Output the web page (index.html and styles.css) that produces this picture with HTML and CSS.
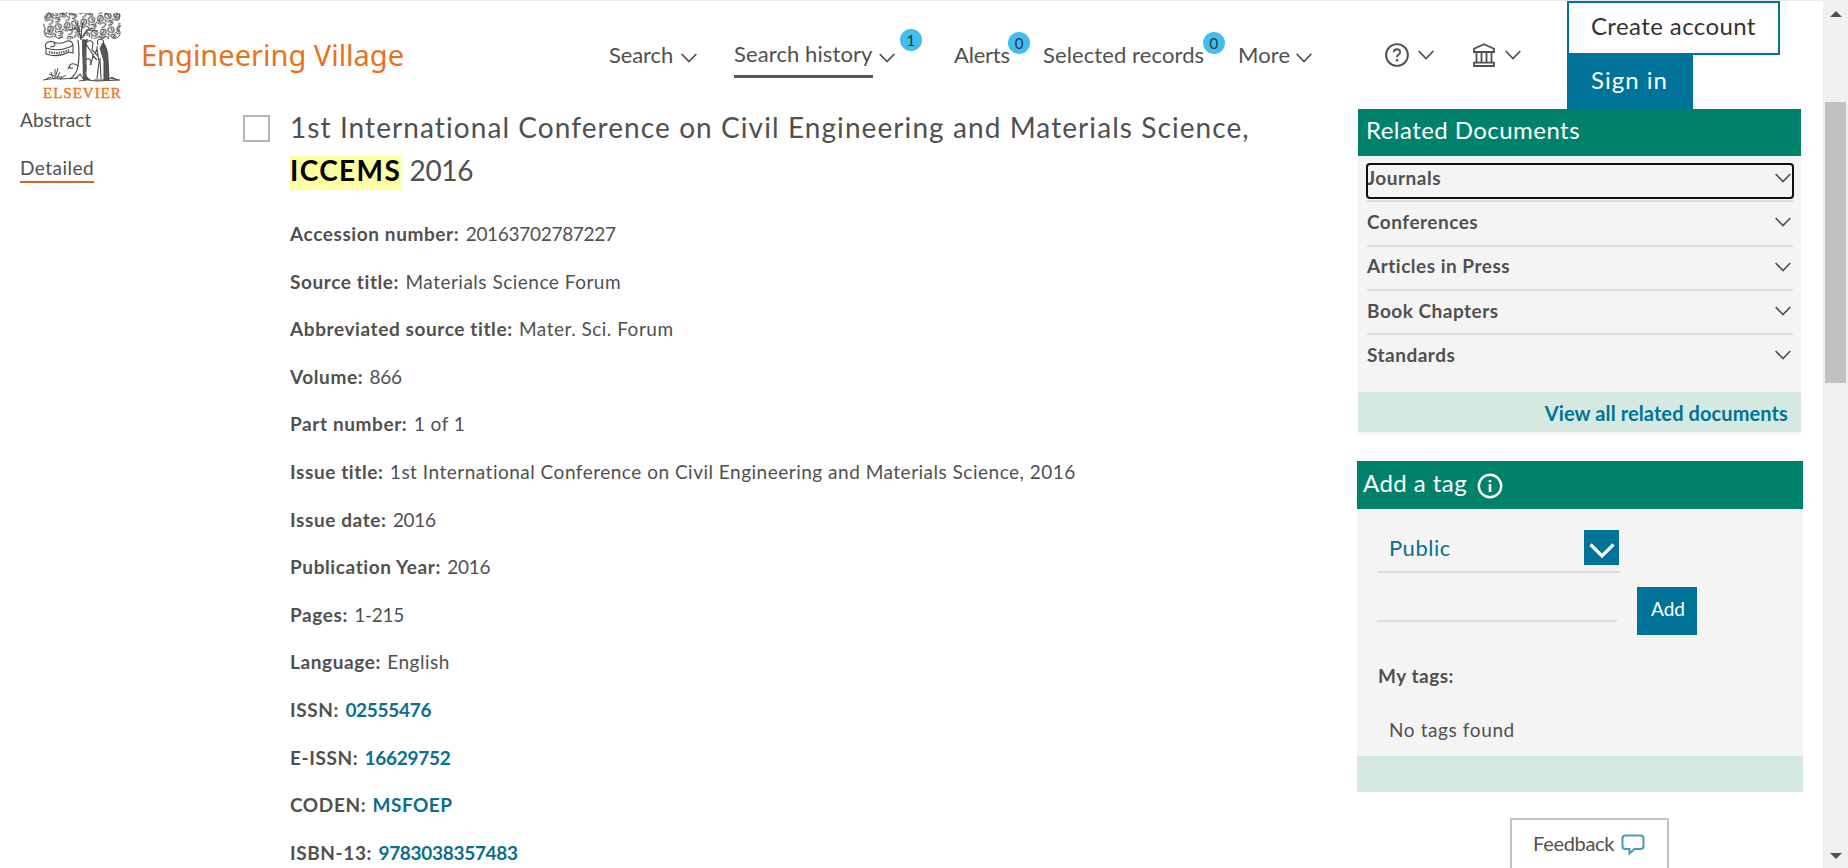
FILE: index.html
```
<!DOCTYPE html>
<html lang="en">
<head>
    <meta charset="UTF-8">
    <meta name="viewport" content="width=device-width, initial-scale=1.0">
    <title>Engineering Village - Detailed record</title>
    <link rel="stylesheet" href="styles.css">
</head>
<body>
    <!-- shared icons -->
    <svg class="sprite" width="0" height="0">
        <symbol id="chevron" viewBox="0 0 16 10">
            <path d="M.7 1 8 8.6 15.3 1" fill="none" stroke="currentColor" stroke-width="1.7"/>
        </symbol>
    </svg>

    <div class="page">
        <header class="header">
            <a class="brand" href="#">
                <svg class="brand-tree" viewBox="0 0 78 70" fill="none" stroke="#4a4a4c">
                    <defs>
                        <pattern id="leaves" width="17" height="14" patternUnits="userSpaceOnUse" patternTransform="rotate(-12)">
                            <path d="M1 4Q2 0 6 2Q8 6 4 7Q0 7 1 4M5 3 2 6M9 2Q13-1 15 3Q15 7 11 6Q8 5 9 2M12 2 13 5M2 10Q5 7 8 11Q6 14 3 13M10 9Q15 7 15 11Q13 14 10 12M8 6 9 9M0 9 2 8M15 8 17 7M12 11 14 10" stroke="#4a4a4c" stroke-width="1.15"/>
                        </pattern>
                    </defs>
                    <path fill="url(#leaves)" stroke="none" d="M3 2Q6-1 9 1Q13 0 16 2Q21-1 26 1Q30 0 34 2Q39 0 43 1Q48 0 52 2Q57-1 61 1Q66 0 70 2Q76-1 78 3Q76 7 77 10Q79 14 76 16Q79 21 77 24Q74 28 68 26Q62 29 56 26Q50 28 46 25Q43 22 41 25L38 27Q35 24 31 26Q25 29 20 26Q14 28 10 25Q5 28 2 23Q-1 19 2 16Q-1 12 2 9Q-1 5 3 2Z"/>
                    <path stroke-width=".9" d="M3 3Q5 0 8 2Q10 4 8 6M16 2Q19 0 22 3M26 2Q30 0 32 4M44 2Q48 0 50 4M61 2Q65 0 66 5M70 3Q75 0 77 4Q77 7 74 8M1 12Q0 16 3 17M77 13Q78 16 74 17M2 20Q1 25 6 25Q10 26 10 22M13 25Q17 28 20 24M56 25Q60 28 63 24M67 24Q73 29 77 23"/>
                    <path stroke-width="1.2" d="M38 28Q38 20 31 15M38 27Q38 18 40 11M39 26Q42 19 49 16M32 17 26 18M46 18 55 19M37 20 34 11M35 28Q37 42 35 54Q34 62 27 67M40 27Q39 40 41 52Q39 61 45 67"/>
                    <path stroke-width="1.1" d="M40 50Q45 54 42 60M41 48Q49 44 48 53M32 67 37 62 41 68M35 54Q30 50 27 53Q25 57 30 56M27 53 25 57"/>
                    <!-- banner -->
                    <path stroke-width="1.1" d="M3 36Q14 40 27 35L30 33 30 41 26 40Q15 46 3 42ZM3 36Q1 32 5 30Q10 28 12 32Q12 35 7 35M10 30Q18 33 24 29Q29 28 30 33"/>
                    <path stroke-width="2" stroke-dasharray="1.4 1" d="M6 40Q16 42.500 26 38"/>
                    <!-- old man -->
                    <path fill="#55565a" stroke="none" d="M39 28 45 27 43 34 42 64 47 68 40 68ZM60 30Q66 35 65 49L66 68 61 68 61 48 57 35Z"/>
                    <path stroke-width="1.1" d="M43 28 43 65 47 68M55 33Q53 27 58 27Q62 28 60 34Q65 38 65 48L66 68 51 68M54 34Q55 39 50 43L43 32M54 37 56 50 54 67M57 36 61 49 61 68M44 30Q48 27 50 31L49 38 55 44M50 43Q49 50 47 53M50 44 54 48M57 46 58 67"/>
                    <!-- ground -->
                    <path stroke-width="1" d="M0 68Q11 66 17 67L35 66M36 69Q45 67 53 69L77 68M68 65 73 67M66 66 76 68M10 67 8 60M12 67 12 57M14 66 17 60M11 64 6 62M13 63 15 56M17 67 23 63M12 65 19 65M3 67 8 65"/>
                </svg>
                <span class="brand-name">ELSEVIER</span>
            </a>
            <a class="product" href="#">Engineering Village</a>

            <nav class="nav">
                <a class="nav-item nav-search" href="#">Search <svg class="chevron"><use href="#chevron"/></svg></a>
                <a class="nav-item nav-history" href="#"><span class="current">Search history</span> <svg class="chevron"><use href="#chevron"/></svg><span class="badge">1</span></a>
                <a class="nav-item nav-alerts" href="#">Alerts<span class="badge">0</span></a>
                <a class="nav-item nav-records" href="#">Selected records<span class="badge">0</span></a>
                <a class="nav-item nav-more" href="#">More <svg class="chevron"><use href="#chevron"/></svg></a>
            </nav>

            <div class="tools">
                <a class="tool tool-help" href="#">
                    <svg class="tool-icon" viewBox="0 0 24 24" fill="none" stroke="currentColor" stroke-width="1.9">
                        <circle cx="12" cy="12" r="10.9"/>
                        <path d="M8.9 9.3Q9 6.2 12 6.2Q15.2 6.3 15.1 9.2Q15 10.900 13.2 11.8Q12 12.400 12 14.3"/>
                        <path d="M12 16.2V18.4" stroke-width="2.3"/>
                    </svg>
                    <svg class="chevron"><use href="#chevron"/></svg>
                </a>
                <a class="tool" href="#">
                    <svg class="tool-icon" viewBox="0 0 24 24" fill="none" stroke="currentColor" stroke-width="1.8">
                        <path d="M2 9V5.8L12 1.3 22 5.8V9ZM2 23V19.6H22V23ZM4.5 9V19.6M9.5 9V19.6M14.5 9V19.6M19.5 9V19.6"/>
                    </svg>
                    <svg class="chevron"><use href="#chevron"/></svg>
                </a>
            </div>

            <div class="account">
                <a class="create-account" href="#">Create account</a>
                <a class="sign-in" href="#">Sign in</a>
            </div>
        </header>

        <div class="content">
            <aside class="views">
                <a class="view" href="#">Abstract</a>
                <a class="view active" href="#">Detailed</a>
            </aside>

            <main class="record">
                <span class="checkbox"></span>
                <div class="record-body">
                    <h1 class="title">1st International Conference on Civil Engineering and Materials Science, <mark class="hit">ICCEMS</mark> <span class="year">2016</span></h1>
                    <ul class="fields">
                        <li><b>Accession number:</b> <span class="num">20163702787227</span></li>
                        <li><b>Source title:</b> Materials Science Forum</li>
                        <li><b>Abbreviated source title:</b> Mater. Sci. Forum</li>
                        <li><b>Volume:</b> <span class="num">866</span></li>
                        <li><b>Part number:</b> 1 of 1</li>
                        <li><b>Issue title:</b> 1st International Conference on Civil Engineering and Materials Science, 2016</li>
                        <li><b>Issue date:</b> <span class="num">2016</span></li>
                        <li><b>Publication Year:</b> <span class="num">2016</span></li>
                        <li><b>Pages:</b> <span class="num">1-215</span></li>
                        <li><b>Language:</b> English</li>
                        <li><b>ISSN:</b> <a class="num" href="#">02555476</a></li>
                        <li><b>E-ISSN:</b> <a class="num" href="#">16629752</a></li>
                        <li><b>CODEN:</b> <a href="#">MSFOEP</a></li>
                        <li><b>ISBN-13:</b> <a class="num" href="#">9783038357483</a></li>
                    </ul>
                </div>
            </main>

            <aside class="side">
                <section class="panel related">
                    <h2 class="panel-title">Related Documents</h2>
                    <div class="related-list">
                        <a class="related-row focused" href="#">Journals <svg class="chevron"><use href="#chevron"/></svg></a>
                        <a class="related-row" href="#">Conferences <svg class="chevron"><use href="#chevron"/></svg></a>
                        <a class="related-row" href="#">Articles in Press <svg class="chevron"><use href="#chevron"/></svg></a>
                        <a class="related-row" href="#">Book Chapters <svg class="chevron"><use href="#chevron"/></svg></a>
                        <a class="related-row" href="#">Standards <svg class="chevron"><use href="#chevron"/></svg></a>
                    </div>
                    <div class="panel-foot"><a href="#">View all related documents</a></div>
                </section>

                <section class="panel tags">
                    <h2 class="panel-title">Add a tag
                        <svg class="info" viewBox="0 0 26 26" fill="none" stroke="#fff">
                            <circle cx="13" cy="13" r="11.2" stroke-width="2.4"/>
                            <path d="M13 7V9.3M13 11V19" stroke-width="2.6"/>
                        </svg>
                    </h2>
                    <div class="tags-body">
                        <div class="select">Public
                            <span class="select-btn"><svg viewBox="0 0 26 16"><path d="M1.5 1.5 13 13 24.5 1.5" fill="none" stroke="#fff" stroke-width="3.2"/></svg></span>
                        </div>
                        <div class="tag-form">
                            <input class="tag-input" type="text">
                            <button class="tag-add">Add</button>
                        </div>
                        <h3 class="my-tags">My tags:</h3>
                        <p class="no-tags">No tags found</p>
                    </div>
                    <div class="panel-foot"></div>
                </section>

                <button class="feedback">Feedback
                    <svg class="bubble" viewBox="0 0 24 22"><path d="M4.5 1.5H19.5Q22.5 1.5 22.5 4.5V12Q22.5 15 19.5 15H13.5L8.5 19.5V15H4.5Q1.5 15 1.5 12V4.5Q1.5 1.5 4.5 1.5Z" fill="none" stroke="#4b9bb5" stroke-width="2"/></svg>
                </button>
            </aside>
        </div>
    </div>

    <div class="scrollbar">
        <span class="arrow up"></span>
        <span class="thumb"></span>
        <span class="arrow down"></span>
    </div>
</body>
</html>
```
FILE: styles.css
```
* {
    box-sizing: border-box;
    margin: 0;
    padding: 0;
}

body {
    display: flex;
    height: 868px;
    overflow: hidden;
    background: #fff;
    color: #505050;
    font-family: Lato, "Liberation Sans", sans-serif;
    font-size: 19px;
    letter-spacing: .5px;
}

a {
    color: inherit;
    text-decoration: none;
}

svg {
    display: block;
    flex: none;
}

.sprite {
    position: absolute;
}

.page {
    width: 1823px;
    height: 868px;
    overflow: hidden;
}

.chevron {
    width: 16px;
    height: 10px;
}

/* header */
.header {
    display: flex;
    height: 109px;
    border-top: 1px solid #ebebeb;
    padding-left: 43px;
}

.brand {
    width: 98px;
    padding-top: 11px;
}

.brand-tree {
    width: 78px;
    height: 70px;
}

.brand-name {
    display: block;
    margin-top: 2px;
    color: #ee7623;
    font: 15px/19px "Liberation Serif", serif;
    letter-spacing: 1px;
    -webkit-text-stroke: .4px #ee7623;
}

.product {
    width: 468px;
    color: #e9711c;
    font-family: "Noto Sans", sans-serif;
    font-size: 29px;
    line-height: 107px;
    letter-spacing: 0;
}

.nav {
    display: flex;
    font-size: 22px;
    letter-spacing: .1px;
}

.nav-item {
    position: relative;
    display: flex;
    align-items: center;
    height: 106px;
}

.nav-item .chevron {
    margin: 7px 0 0 6px;
}

.nav-search {
    width: 125px;
    letter-spacing: -.1px;
}

.nav-search .chevron {
    margin-left: 8px;
}

.nav-history {
    width: 220px;
}

.nav-alerts {
    width: 89px;
    letter-spacing: -.2px;
}

.nav-records {
    width: 195px;
}

.nav-more {
    width: 147px;
}

.current {
    height: 37px;
    margin-top: 10px;
    border-bottom: 3px solid #5a5a5c;
    line-height: 26px;
}

.badge {
    position: absolute;
    top: 31px;
    left: 64px;
    width: 22px;
    height: 22px;
    border-radius: 50%;
    background: #41bdee;
    color: #333;
    font-size: 15px;
    line-height: 22px;
    text-align: center;
}

.nav-history .badge {
    top: 28px;
    left: 166px;
}

.nav-alerts .badge {
    left: 54px;
}

.nav-records .badge {
    left: 160px;
}

.tools {
    display: flex;
    width: 182px;
}

.tool {
    display: flex;
    align-items: center;
    gap: 9px;
    height: 107px;
}

.tool-help {
    width: 87px;
}

.tool-icon {
    width: 24px;
    height: 24px;
}

.account {
    display: flex;
    flex-direction: column;
    align-items: flex-start;
    color: #333;
    font-size: 24px;
    letter-spacing: .4px;
}

.create-account {
    width: 213px;
    height: 54px;
    border: 2px solid #007398;
    padding-left: 22px;
    line-height: 46px;
}

.sign-in {
    width: 126px;
    height: 54px;
    background: #007398;
    color: #fff;
    padding-left: 24px;
    line-height: 50px;
    letter-spacing: 1px;
}

.content {
    display: flex;
}

/* record view switch */
.views {
    display: flex;
    flex-direction: column;
    align-items: flex-start;
    gap: 22px;
    width: 243px;
    padding-left: 20px;
}

.view {
    height: 26px;
    line-height: 21px;
    letter-spacing: .1px;
}

.view.active {
    border-bottom: 2px solid #c9682f;
    letter-spacing: .5px;
}

/* record */
.record {
    display: flex;
    width: 1114px;
}

.checkbox {
    width: 27px;
    height: 27px;
    margin: 6px 20px 0 0;
    border: 2px solid #b3b3b3;
}

.record-body {
    width: 990px;
    margin-top: -3px;
}

.title {
    margin-bottom: 18px;
    font-size: 28px;
    font-weight: 400;
    line-height: 43px;
    letter-spacing: 1.08px;
}

.hit {
    background: linear-gradient(transparent 3px, #ffffa3 3px);
    padding-bottom: 3px;
    color: #000;
    font-weight: 700;
    letter-spacing: 1.4px;
}

.year {
    letter-spacing: -.3px;
}

.fields {
    list-style: none;
}

.fields li {
    line-height: 47.6px;
}

.fields b {
    margin-right: 1px;
    letter-spacing: .6px;
}

.fields .num {
    letter-spacing: -.3px;
}

.fields a {
    color: #0b6e8d;
    font-weight: 700;
}

/* side panels */
.side {
    width: 446px;
}

.panel {
    background: #f4f4f4;
}

.panel-title {
    background: #00826a;
    color: #fff;
    font-size: 24px;
    font-weight: 400;
    letter-spacing: .45px;
}

.panel-foot {
    background: #d5e9e1;
}

.related {
    width: 443px;
    margin-left: 1px;
    box-shadow: 0 3px 2px rgba(0, 0, 0, .04);
}

.related .panel-title {
    height: 47px;
    padding-left: 8px;
    line-height: 42px;
}

.related-list {
    height: 236px;
    padding: 2px 8px 0 9px;
}

.related-row {
    position: relative;
    display: flex;
    align-items: center;
    justify-content: space-between;
    height: 44.3px;
    padding: 0 2px 4px 0;
    border-bottom: 2px solid #dcdcdc;
    font-weight: 700;
}

.related-row .chevron {
    margin-top: 2px;
}

.related-row:last-child {
    border-color: transparent;
}

.related-row.focused::after {
    content: "";
    position: absolute;
    inset: 5px -1px 1px;
    border: 2px solid #101010;
    border-radius: 4px;
}

.related .panel-foot {
    height: 40px;
    padding-right: 13px;
    color: #007398;
    font-size: 20px;
    font-weight: 700;
    line-height: 43px;
    letter-spacing: .1px;
    text-align: right;
}

.tags {
    width: 446px;
    margin-top: 29px;
}

.tags .panel-title {
    display: flex;
    gap: 10px;
    height: 48px;
    padding-left: 6px;
    line-height: 44px;
}

.info {
    width: 26px;
    height: 26px;
    margin-top: 12px;
}

.tags-body {
    height: 247px;
    padding: 21px 0 0 20px;
}

.select {
    display: flex;
    justify-content: space-between;
    width: 243px;
    height: 43px;
    border-bottom: 2px solid #dcdcdc;
    padding: 0 1px 0 12px;
    color: #0b6e8d;
    font-size: 22px;
    line-height: 36px;
}

.select-btn {
    display: flex;
    justify-content: center;
    align-items: center;
    width: 35px;
    height: 35px;
    background: #007398;
}

.select-btn svg {
    width: 26px;
    height: 16px;
    margin-top: 7px;
}

.tag-form {
    display: flex;
    gap: 20px;
    margin-top: 14px;
}

.tag-input {
    width: 240px;
    height: 35px;
    border: 0;
    border-bottom: 2px solid #dcdcdc;
    background: none;
}

.tag-add {
    width: 60px;
    height: 48px;
    border: 0;
    background: #007398;
    color: #fff;
    font: 19px/23px Lato, sans-serif;
    padding: 0 0 5px 2px;
}

.my-tags {
    margin: 29px 0 0 1px;
    font-size: 19px;
    line-height: 24px;
}

.no-tags {
    margin: 30px 0 0 12px;
    line-height: 24px;
    letter-spacing: .6px;
}

.tags .panel-foot {
    height: 36px;
}

.feedback {
    display: flex;
    width: 159px;
    height: 60px;
    margin: 26px 0 0 153px;
    border: 2px solid #c4c4c4;
    background: #fff;
    padding: 11px 0 0 21px;
    color: #505050;
    font: 20px/24px Lato, sans-serif;
    letter-spacing: -.3px;
}

.bubble {
    width: 24px;
    height: 22px;
    margin: 3px 0 0 7px;
}

/* window scrollbar */
.scrollbar {
    display: flex;
    flex-direction: column;
    align-items: center;
    width: 25px;
    background: #f0f0f0;
}

.thumb {
    width: 21px;
    height: 281px;
    margin-top: 85px;
    background: #c1c1c1;
}

.arrow {
    border: 6px solid transparent;
}

.up {
    margin-top: 5px;
    border-bottom-color: #505050;
}

.down {
    margin: auto 0 3px;
    border-top-color: #505050;
}
```
